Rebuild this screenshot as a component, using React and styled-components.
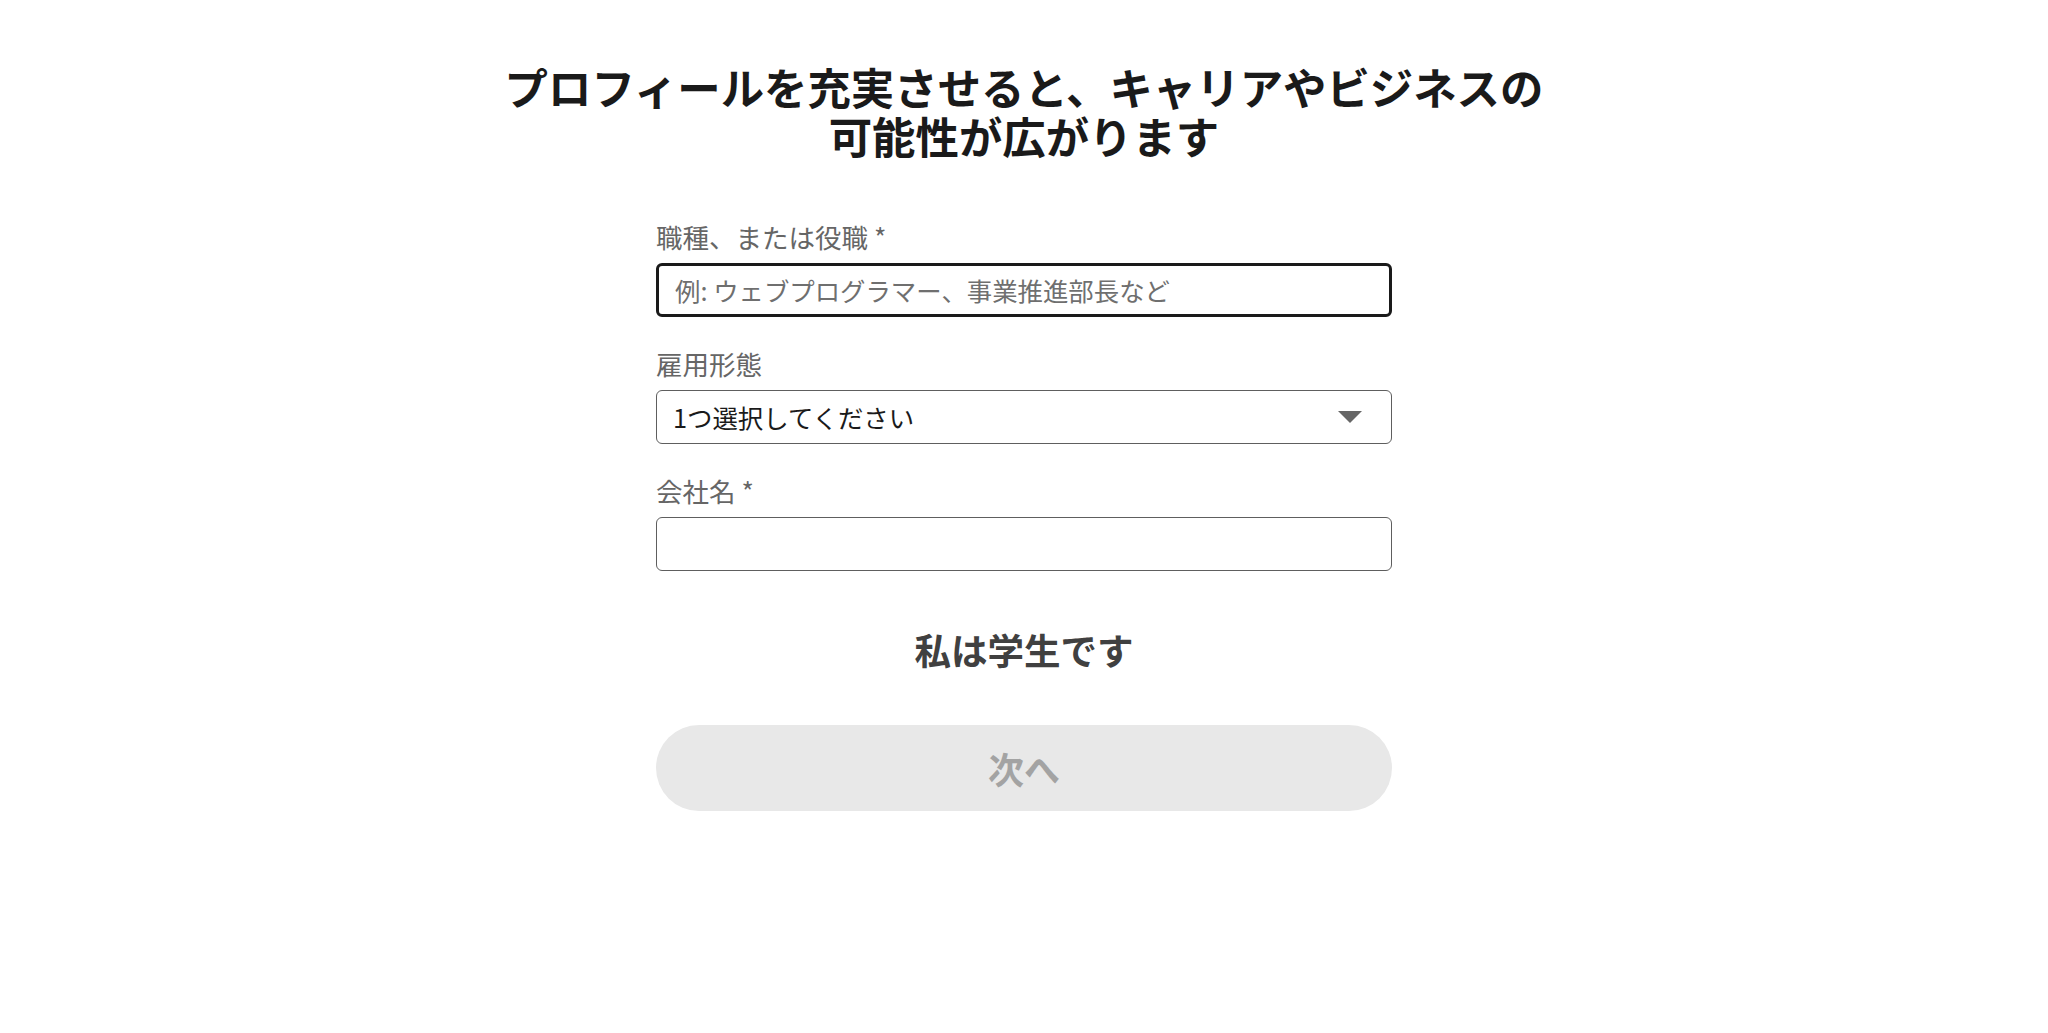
import styled, { createGlobalStyle } from 'styled-components';

const GlobalStyle = createGlobalStyle`
  body {
    margin: 0;
    background: #fff;
    font-family: "Noto Sans CJK JP", "Noto Sans", sans-serif;
  }
`;

export default function App() {
    return (
        <Page>
            <GlobalStyle />
            <Title>
                <TitleLine>プロフィールを充実させると、キャリアやビジネスの</TitleLine>
                <TitleLine>可能性が広がります</TitleLine>
            </Title>
            <Form>
                <Field>
                    <Label>職種、または役職 *</Label>
                    <TextInput focused placeholder="例: ウェブプログラマー、事業推進部長など" />
                </Field>
                <Field>
                    <Label>雇用形態</Label>
                    <SelectWrap>
                        <Select defaultValue="">
                            <option value="">1つ選択してください</option>
                        </Select>
                        <Caret width="24" height="12" viewBox="0 0 24 12">
                            <path d="M0 0 L24 0 L12 12 Z" fill="#666" />
                        </Caret>
                    </SelectWrap>
                </Field>
                <Field>
                    <Label>会社名 *</Label>
                    <TextInput />
                </Field>
            </Form>
            <StudentButton>私は学生です</StudentButton>
            <NextButton disabled>次へ</NextButton>
        </Page>
    );
}

const Page = styled.div`
display: flex;
flex-direction: column;
align-items: center;
padding-top: 62px;
`;
const Title = styled.h1`
margin: 0;
font-size: 43.4px;
line-height: 49px;
font-weight: 700;
color: #1a1a1a;
text-align: center;
`;
const TitleLine = styled.span`
display: block;
`;
const Form = styled.div`
width: 736px;
display: flex;
flex-direction: column;
gap: 30px;
margin-top: 60px;
`;
const Field = styled.div`
display: flex;
flex-direction: column;
gap: 9px;
`;
const Label = styled.label`
font-size: 26.5px;
line-height: 34px;
color: #666;
`;
const TextInput = styled.input`
box-sizing: border-box;
width: 100%;
height: 54px;
padding: 0 16px;
font-family: inherit;
font-size: 25.4px;
color: #1a1a1a;
background: #fff;
border: ${props => props.focused ? '3px solid #1a1a1a' : '1.5px solid #5e5e5e'};
border-radius: 6px;
outline: none;
    &::placeholder {
        color: #6f6f6f;
    }
`;
const SelectWrap = styled.div`
position: relative;
`;
const Select = styled.select`
box-sizing: border-box;
width: 100%;
height: 54px;
padding: 0 16px;
font-family: inherit;
font-size: 25.4px;
color: #1a1a1a;
background: #fff;
border: 1.5px solid #5e5e5e;
border-radius: 6px;
appearance: none;
outline: none;
`;
const Caret = styled.svg`
position: absolute;
right: 30px;
top: 21px;
pointer-events: none;
`;
const StudentButton = styled.button`
margin-top: 57px;
background: none;
border: none;
padding: 0 12px;
font-family: inherit;
font-size: 36.5px;
line-height: 44px;
font-weight: 700;
color: #404040;
cursor: pointer;
`;
const NextButton = styled.button`
margin-top: 53px;
width: 736px;
height: 86px;
border: none;
border-radius: 43px;
background: #e8e8e8;
font-family: inherit;
font-size: 36px;
font-weight: 700;
color: #a3a3a3;
`;
